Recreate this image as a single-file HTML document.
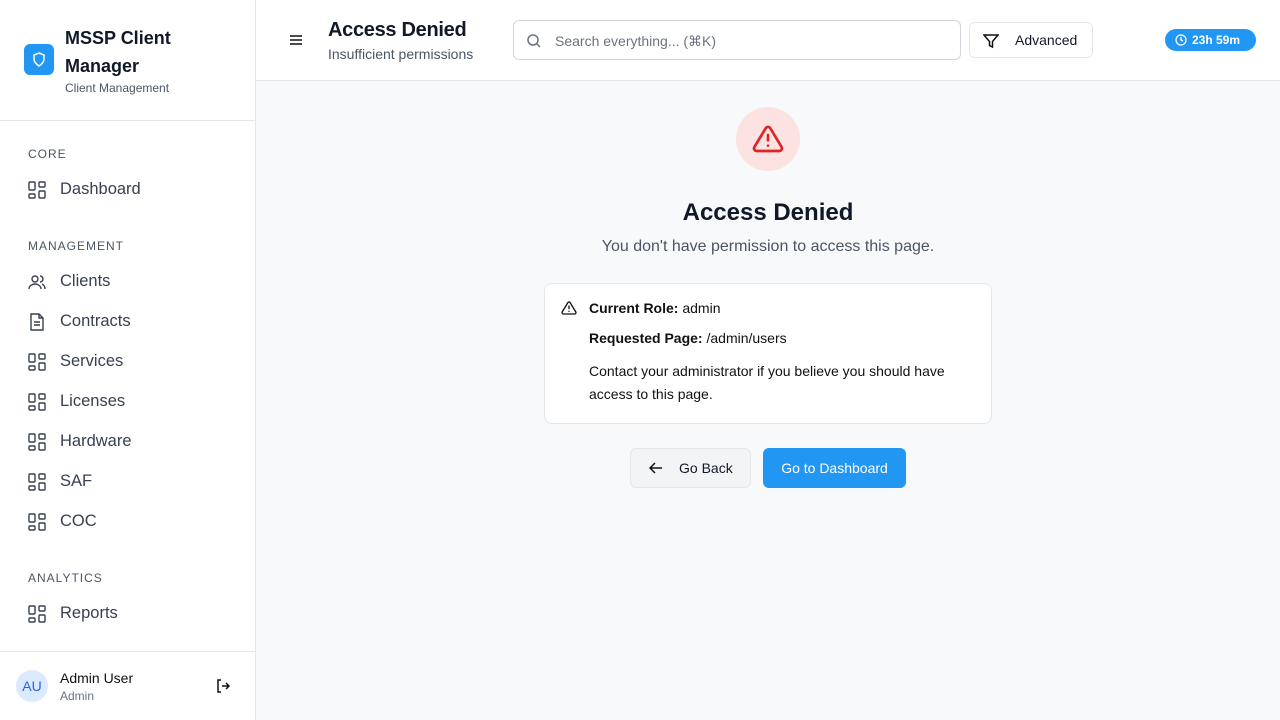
<!DOCTYPE html>
<html><head><style>
*{box-sizing:border-box;margin:0;padding:0}
body{width:1280px;height:720px;font-family:"Liberation Sans",sans-serif;background:#f8f9fb;position:relative;overflow:hidden;color:#111827}
.side{position:absolute;left:0;top:0;width:256px;height:720px;background:#fff;border-right:1px solid #e5e7eb}
.logo{position:absolute;left:24px;top:44px;width:30px;height:31px;background:#2196f3;border-radius:6px}
.brand{position:absolute;left:65px;top:24px;font-size:18px;font-weight:bold;line-height:28px;color:#111827}
.sub{position:absolute;left:65px;top:81px;font-size:12px;color:#4b5563}
.hr{position:absolute;left:0;width:256px;height:1px;background:#e5e7eb}
.sec{position:absolute;left:28px;font-size:12px;letter-spacing:1px;color:#4b5563}
.item{position:absolute;left:28px;font-size:16.5px;color:#374151;display:flex;align-items:center;gap:14px}
.item svg{width:18px;height:18px}
.top{position:absolute;left:256px;top:0;right:0;height:81px;background:#fff;border-bottom:1px solid #e5e7eb}
.card{position:absolute;left:544px;top:283px;width:448px;height:141px;background:#fff;border:1px solid #e5e7eb;border-radius:8px;font-size:14px;color:#111}
</style></head><body>
<div class="side">
<div class="logo"><svg width="30" height="31" viewBox="0 0 30 31"><path d="M15 9l5 2v4c0 3-2 5-5 7c-3-2-5-4-5-7v-4z" fill="none" stroke="#fff" stroke-width="1.5"/></svg></div>
<div class="brand">MSSP Client<br>Manager</div>
<div class="sub">Client Management</div>
<div class="hr" style="top:120px"></div>
<div class="sec" style="top:147px">CORE</div>
<div class="item" style="top:180px"><svg viewBox="0 0 18 18" fill="none" stroke="#374151" stroke-width="1.4"><rect x="1" y="1" width="6" height="8" rx="1"/><rect x="11" y="1" width="6" height="5" rx="1"/><rect x="11" y="10" width="6" height="7" rx="1"/><rect x="1" y="13" width="6" height="4" rx="1"/></svg>Dashboard</div>
<div class="sec" style="top:239px">MANAGEMENT</div>
<div class="item" style="top:272px"><svg viewBox="0 0 18 18" fill="none" stroke="#374151" stroke-width="1.4"><circle cx="7" cy="6" r="3"/><path d="M1 16c0-3 3-5 6-5s6 2 6 5M12 3a3 3 0 010 6M14 11c2 1 3 3 3 5"/></svg>Clients</div>
<div class="item" style="top:312px"><svg viewBox="0 0 18 18" fill="none" stroke="#374151" stroke-width="1.4"><path d="M3 1h8l4 4v12H3z M11 1v4h4 M6 9h6M6 12h6"/></svg>Contracts</div>
<div class="item" style="top:352px"><svg viewBox="0 0 18 18" fill="none" stroke="#374151" stroke-width="1.4"><rect x="1" y="1" width="6" height="8" rx="1"/><rect x="11" y="1" width="6" height="5" rx="1"/><rect x="11" y="10" width="6" height="7" rx="1"/><rect x="1" y="13" width="6" height="4" rx="1"/></svg>Services</div>
<div class="item" style="top:392px"><svg viewBox="0 0 18 18" fill="none" stroke="#374151" stroke-width="1.4"><rect x="1" y="1" width="6" height="8" rx="1"/><rect x="11" y="1" width="6" height="5" rx="1"/><rect x="11" y="10" width="6" height="7" rx="1"/><rect x="1" y="13" width="6" height="4" rx="1"/></svg>Licenses</div>
<div class="item" style="top:432px"><svg viewBox="0 0 18 18" fill="none" stroke="#374151" stroke-width="1.4"><rect x="1" y="1" width="6" height="8" rx="1"/><rect x="11" y="1" width="6" height="5" rx="1"/><rect x="11" y="10" width="6" height="7" rx="1"/><rect x="1" y="13" width="6" height="4" rx="1"/></svg>Hardware</div>
<div class="item" style="top:472px"><svg viewBox="0 0 18 18" fill="none" stroke="#374151" stroke-width="1.4"><rect x="1" y="1" width="6" height="8" rx="1"/><rect x="11" y="1" width="6" height="5" rx="1"/><rect x="11" y="10" width="6" height="7" rx="1"/><rect x="1" y="13" width="6" height="4" rx="1"/></svg>SAF</div>
<div class="item" style="top:512px"><svg viewBox="0 0 18 18" fill="none" stroke="#374151" stroke-width="1.4"><rect x="1" y="1" width="6" height="8" rx="1"/><rect x="11" y="1" width="6" height="5" rx="1"/><rect x="11" y="10" width="6" height="7" rx="1"/><rect x="1" y="13" width="6" height="4" rx="1"/></svg>COC</div>
<div class="sec" style="top:571px">ANALYTICS</div>
<div class="item" style="top:604px"><svg viewBox="0 0 18 18" fill="none" stroke="#374151" stroke-width="1.4"><rect x="1" y="1" width="6" height="8" rx="1"/><rect x="11" y="1" width="6" height="5" rx="1"/><rect x="11" y="10" width="6" height="7" rx="1"/><rect x="1" y="13" width="6" height="4" rx="1"/></svg>Reports</div>
<div class="hr" style="top:651px"></div>
<div style="position:absolute;left:16px;top:670px;width:32px;height:32px;border-radius:50%;background:#dbeafe;color:#2563eb;font-size:14px;text-align:center;line-height:32px">AU</div>
<div style="position:absolute;left:60px;top:670px;font-size:14px;color:#111">Admin User</div>
<div style="position:absolute;left:60px;top:689px;font-size:12px;color:#6b7280">Admin</div>
<svg style="position:absolute;left:215px;top:678px" width="16" height="16" viewBox="0 0 16 16" fill="none" stroke="#111" stroke-width="1.5"><path d="M6 2H3v12h3M7 8h7M11 5l3 3-3 3"/></svg>
</div>
<div class="top">
<svg style="position:absolute;left:33px;top:33px" width="14" height="14" viewBox="0 0 14 14" stroke="#111" stroke-width="1.5"><path d="M1 3h12M1 7h12M1 11h12"/></svg>
<div style="position:absolute;left:72px;top:19px;font-size:20px;font-weight:bold;color:#111827;letter-spacing:-0.3px">Access Denied</div>
<div style="position:absolute;left:72px;top:46px;font-size:14px;color:#4b5563">Insufficient permissions</div>
<div style="position:absolute;left:257px;top:20px;width:448px;height:40px;border:1px solid #d1d5db;border-radius:6px;background:#fff">
<svg style="position:absolute;left:12px;top:12px" width="16" height="16" viewBox="0 0 16 16" fill="none" stroke="#6b7280" stroke-width="1.5"><circle cx="7" cy="7" r="5"/><path d="M11 11l3 3"/></svg>
<span style="position:absolute;left:41px;top:12px;font-size:14px;color:#6b7280">Search everything... (⌘K)</span></div>
<div style="position:absolute;left:713px;top:22px;width:124px;height:36px;border:1px solid #e5e7eb;border-radius:6px;background:#fff;font-size:14px">
<svg style="position:absolute;left:13px;top:10px" width="16" height="16" viewBox="0 0 16 16" fill="none" stroke="#111" stroke-width="1.5"><path d="M1 2h14l-5.5 6.5V14l-3-1.5V8.5z"/></svg>
<span style="position:absolute;left:45px;top:9px">Advanced</span></div>
<div style="position:absolute;left:909px;top:29px;width:91px;height:22px;border-radius:11px;background:#2196f3;color:#fff;font-size:12px;font-weight:bold;line-height:22px;padding-left:27px">23h 59m
<svg style="position:absolute;left:10px;top:5px" width="12" height="12" viewBox="0 0 12 12" fill="none" stroke="#fff" stroke-width="1.3"><circle cx="6" cy="6" r="5"/><path d="M6 3v3l2 1"/></svg></div>
</div>
<div style="position:absolute;left:736px;top:107px;width:64px;height:64px;border-radius:50%;background:#fde2e2"><svg style="position:absolute;left:16px;top:16px" width="32" height="32" viewBox="0 0 24 24" fill="none" stroke="#dc2626" stroke-width="2" stroke-linecap="round" stroke-linejoin="round"><path d="M10.3 3.9L1.8 18a2 2 0 001.7 3h17a2 2 0 001.7-3L13.7 3.9a2 2 0 00-3.4 0zM12 9v4M12 17h.01"/></svg></div>
<div style="position:absolute;left:256px;right:0;top:199px;text-align:center;font-size:24px;font-weight:bold;color:#111827">Access Denied</div>
<div style="position:absolute;left:256px;right:0;top:238px;text-align:center;font-size:16px;color:#4b5563">You don't have permission to access this page.</div>
<div class="card">
<svg style="position:absolute;left:16px;top:16px" width="16" height="16" viewBox="0 0 24 24" fill="none" stroke="#111" stroke-width="2" stroke-linecap="round" stroke-linejoin="round"><path d="M10.3 3.9L1.8 18a2 2 0 001.7 3h17a2 2 0 001.7-3L13.7 3.9a2 2 0 00-3.4 0zM12 9v4M12 17h.01"/></svg>
<div style="position:absolute;left:44px;top:16px"><b>Current Role:</b> admin</div>
<div style="position:absolute;left:44px;top:46px"><b>Requested Page:</b> /admin/users</div>
<div style="position:absolute;left:44px;top:76px;line-height:23px;width:390px">Contact your administrator if you believe you should have access to this page.</div>
</div>
<div style="position:absolute;left:630px;top:448px;width:121px;height:40px;border:1px solid #e5e7eb;border-radius:6px;background:#f3f4f6;font-size:14px">
<svg style="position:absolute;left:18px;top:12px" width="14" height="14" viewBox="0 0 14 14" fill="none" stroke="#111" stroke-width="1.5"><path d="M13 7H1M6 2L1 7l5 5"/></svg>
<span style="position:absolute;left:48px;top:11px">Go Back</span></div>
<div style="position:absolute;left:763px;top:448px;width:143px;height:40px;border-radius:6px;background:#2196f3;color:#fff;font-size:14px;text-align:center;line-height:40px">Go to Dashboard</div>
</body></html>
